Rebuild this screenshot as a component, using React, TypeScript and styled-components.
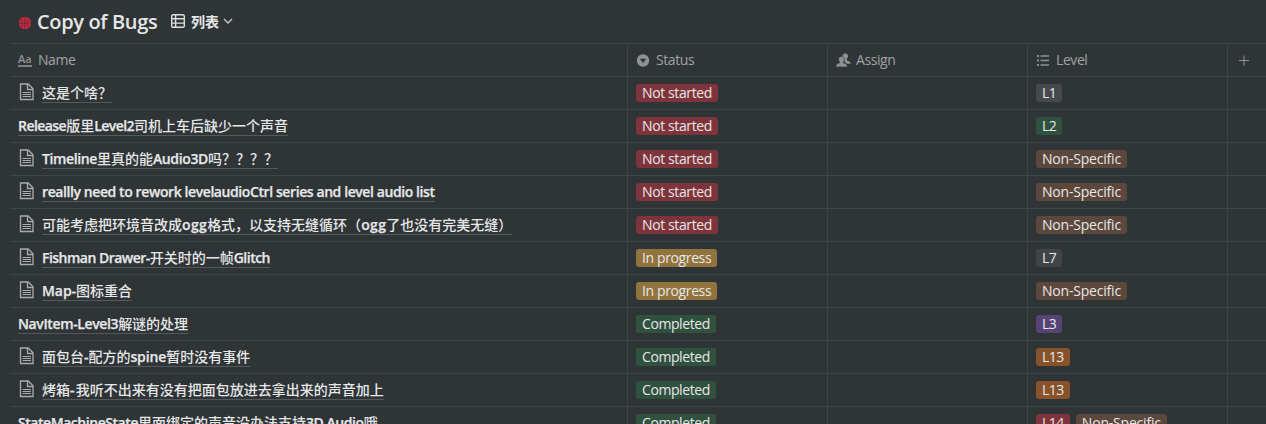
import React from "react";
import styled, { createGlobalStyle } from "styled-components";

const GlobalStyle = createGlobalStyle`
  * { box-sizing: border-box; }
  body {
    margin: 0;
    background: #2f3437;
    color: #e6e7e7;
    font-family: "Open Sans", "Noto Sans CJK SC", sans-serif;
    font-size: 14px;
    overflow: hidden;
  }
`;

const LINE = "#3f4447";

const Page = styled.main`
  height: 424px;
  overflow: hidden;
  padding-left: 10px;
`;

const Header = styled.header`
  height: 43px;
  display: flex;
  align-items: center;
  padding: 0 0 1px 8px;
`;

const Bug = styled.svg`
  width: 14px;
  height: 14px;
  margin: 3px 5px 0 0;
  flex: none;
`;

const Title = styled.h1`
  margin: 0;
  width: 134px;
  font-size: 20px;
  line-height: 26px;
  font-weight: 600;
  letter-spacing: -0.36px;
  white-space: nowrap;
  padding-top: 1px;
`;

const ViewButton = styled.div`
  display: flex;
  align-items: center;
  height: 20px;
  margin-top: -1px;
  font-size: 14px;
  line-height: 20px;
`;

const ViewLabel = styled.span`
  margin: 0 4px 0 6px;
  font-family: "Noto Sans CJK SC", sans-serif;
  font-weight: 700;
`;

const Row = styled.div`
  display: grid;
  grid-template-columns: 618px 200px 200px 200px 1fr;
  height: 33px;
  border-top: 1px solid ${LINE};
`;

const Cell = styled.div`
  display: flex;
  align-items: center;
  gap: 6px;
  padding-left: 8px;
  min-width: 0;
  border-right: 1px solid ${LINE};
  &:last-child { border-right: 0; }
`;

const HeadCell = styled(Cell)`
  gap: 5px;
  color: #a0a3a4;
  letter-spacing: -0.42px;
  line-height: 20px;
`;

const HeadIcon = styled.svg`
  width: 15px;
  height: 15px;
  flex: none;
  fill: #8f9293;
`;

const TextIcon = styled.span`
  width: 14px;
  height: 14px;
  margin-right: 1px;
  border-bottom: 2px solid #7f8284;
  color: #8f9293;
  font-size: 11px;
  font-weight: 600;
  line-height: 12px;
  letter-spacing: 0;
`;

const AddCell = styled(HeadCell)`
  padding-left: 9px;
`;

const PageIcon = styled.svg`
  width: 15px;
  height: 18px;
  flex: none;
  margin: 0 2px 2px 1px;
`;

const Name = styled.span<{ $track: number }>`
  display: flex;
  height: 18px;
  line-height: 15px;
  margin-top: 1px;
  border-bottom: 1px solid #55595c;
  font-weight: 600;
  white-space: pre;
  letter-spacing: ${(p) => p.$track}px;
`;

const Latin = styled.span`
  -webkit-text-stroke: 0.25px currentColor;
`;

const Han = styled.span`
  font-family: "Noto Sans CJK SC", sans-serif;
  font-weight: 500;
  letter-spacing: 0;
`;

const tones = {
  red: "#7f343b",
  yellow: "#90733d",
  green: "#31513f",
  gray: "#464a4e",
  dim: "#404447",
  brown: "#5c473c",
  purple: "#564476",
  orange: "#88532a",
};
type Tone = keyof typeof tones;

const Tag = styled.span<{ $tone: Tone; $track: number }>`
  height: 18px;
  padding: 0 6px;
  border-radius: 3px;
  background: ${(p) => tones[p.$tone]};
  line-height: 18px;
  letter-spacing: ${(p) => p.$track}px;
  white-space: nowrap;
`;

type Level = [string, Tone];
type Item = { name: string; doc: boolean; status: keyof typeof statuses; levels: Level[]; track: number };

const statuses = {
  "Not started": { tone: "red" as Tone, track: -0.38 },
  "In progress": { tone: "yellow" as Tone, track: -0.38 },
  Completed: { tone: "green" as Tone, track: -0.42 },
};

const general: Level = ["Non-Specific", "brown"];

const items: Item[] = [
  { name: "这是个啥？", doc: true, status: "Not started", levels: [["L1", "gray"]], track: 0 },
  { name: "Release版里Level2司机上车后缺少一个声音", doc: false, status: "Not started", levels: [["L2", "green"]], track: -0.55 },
  { name: "Timeline里真的能Audio3D吗？？？？", doc: true, status: "Not started", levels: [general], track: -0.38 },
  { name: "reallly need to rework levelaudioCtrl series and level audio list", doc: true, status: "Not started", levels: [general], track: -0.41 },
  { name: "可能考虑把环境音改成ogg格式，以支持无缝循环（ogg了也没有完美无缝）", doc: true, status: "Not started", levels: [general], track: 0.35 },
  { name: "Fishman Drawer-开关时的一帧Glitch", doc: true, status: "In progress", levels: [["L7", "dim"]], track: -0.52 },
  { name: "Map-图标重合", doc: true, status: "In progress", levels: [general], track: -0.05 },
  { name: "NavItem-Level3解谜的处理", doc: false, status: "Completed", levels: [["L3", "purple"]], track: -0.38 },
  { name: "面包台-配方的spine暂时没有事件", doc: true, status: "Completed", levels: [["L13", "orange"]], track: -0.1 },
  { name: "烤箱-我听不出来有没有把面包放进去拿出来的声音加上", doc: true, status: "Completed", levels: [["L13", "orange"]], track: 1.3 },
  { name: "StateMachineState里面绑定的声音没办法支持3D Audio哦", doc: false, status: "Completed", levels: [["L14", "red"], general], track: -0.45 },
];

function DocIcon() {
  return (
    <PageIcon viewBox="0 0 15 18" fill="none" stroke="#a9acad" strokeWidth="1.3">
      <path d="M1.500 1h7.700l4.800 4.800v10.700H1.500z" />
      <path d="M8.500 1v5.500H14" />
      <path d="M3.500 9.500h8.500M3.500 11.500h8.500M3.500 13.500h8.500" strokeWidth="1" />
    </PageIcon>
  );
}

function NameText({ item }: { item: Item }) {
  const parts = item.name.split(/([\u3000-\u9fff\uff00-\uffef]+)/).filter(Boolean);
  return (
    <Name $track={item.track}>
      {parts.map((part, i) =>
        /[\u3000-\u9fff\uff00-\uffef]/.test(part) ? <Han key={i}>{part}</Han> : <Latin key={i}>{part}</Latin>
      )}
    </Name>
  );
}

export default function App() {
  return (
    <Page>
      <GlobalStyle />
      <Header>
        <Bug viewBox="0 0 14 14">
          <circle cx="7" cy="7" r="6.2" fill="#c4283e" />
          <path d="M7 1v12M1 7h12M3 3.5l2 1.5M11 3.5L9 5M3 10.5L5 9M11 10.5L9 9" stroke="#5a2a32" strokeWidth=".9" />
        </Bug>
        <Title>Copy of Bugs</Title>
        <ViewButton>
          <svg width="14" height="14" viewBox="0 0 14 14" fill="none" stroke="#dcdddd" strokeWidth="1.4">
            <rect x=".7" y=".7" width="12.6" height="12.6" rx="1.4" />
            <path d="M4.6 1v12M1 4.8h12M1 9.1h12" />
          </svg>
          <ViewLabel>列表</ViewLabel>
          <svg width="10" height="10" viewBox="0 0 10 10" fill="none" stroke="#c8caca" strokeWidth="1.3">
            <path d="M1 3l4 4 4-4" />
          </svg>
        </ViewButton>
      </Header>
      <Row>
        <HeadCell>
          <TextIcon>Aa</TextIcon>
          Name
        </HeadCell>
        <HeadCell>
          <HeadIcon viewBox="0 0 15 15">
            <path fillRule="evenodd" d="M7 1.3a6.2 6.2 0 1 0 0 12.4A6.2 6.2 0 0 0 7 1.3zM3.8 5.7h6.4L7 9.9z" />
          </HeadIcon>
          Status
        </HeadCell>
        <HeadCell>
          <HeadIcon viewBox="0 0 15 15">
            <circle cx="9.300" cy="3.300" r="2.700" />
            <path d="M8.800 5.500h2v1.800l2.500 1.200c1 .5 1.300 1 1.300 2.300h-4L8.300 8.500z" />
            <path d="M5.500 3.600c1.700 0 2.900 1.200 2.900 2.800 0 1-.4 1.900-1.100 2.500v.8l2.700 1.200c.9.400 1.200 1.200 1.200 3H0c0-1.800.3-2.600 1.200-3l2.500-1.200v-.8C3 8.300 2.600 7.400 2.600 6.400c0-1.600 1.200-2.800 2.900-2.800z" stroke="#2f3437" strokeWidth=".5" />
          </HeadIcon>
          Assign
        </HeadCell>
        <HeadCell>
          <HeadIcon viewBox="0 0 15 15">
            <path d="M1 2h2v2H1zM1 6.500h2v2H1zM1 11h2v2H1zM4.500 2.300H13v1.500H4.500zM4.500 6.800H13v1.500H4.500zM4.500 11.300H13v1.500H4.500z" />
          </HeadIcon>
          Level
        </HeadCell>
        <AddCell>
          <HeadIcon viewBox="0 0 15 15">
            <path d="M6.500 2.500h1V7h4.500v1H7.500v4.500h-1V8H2V7h4.500z" />
          </HeadIcon>
        </AddCell>
      </Row>
      {items.map((item) => (
        <Row key={item.name}>
          <Cell>
            {item.doc && <DocIcon />}
            <NameText item={item} />
          </Cell>
          <Cell>
            <Tag $tone={statuses[item.status].tone} $track={statuses[item.status].track}>{item.status}</Tag>
          </Cell>
          <Cell />
          <Cell>
            {item.levels.map(([label, tone]) => (
              <Tag key={label} $tone={tone} $track={label.length < 4 ? -0.5 : -0.2}>{label}</Tag>
            ))}
          </Cell>
          <Cell />
        </Row>
      ))}
    </Page>
  );
}
